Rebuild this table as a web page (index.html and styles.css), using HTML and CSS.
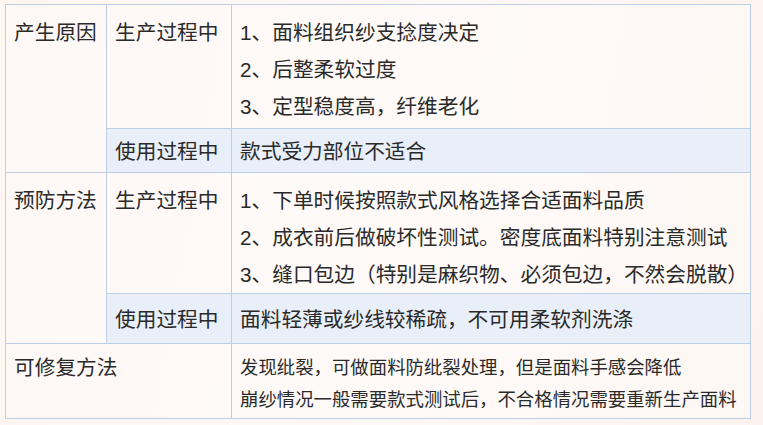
FILE: index.html
```html
<!DOCTYPE html>
<html lang="zh">
<head>
<meta charset="utf-8">
<link rel="stylesheet" href="styles.css">
</head>
<body>
<table class="grid">
  <colgroup>
    <col class="c1">
    <col class="c2">
    <col class="c3">
  </colgroup>
  <tr class="row-a">
    <td rowspan="2" class="head">产生原因</td>
    <td>生产过程中</td>
    <td>
      <div>1、面料组织纱支捻度决定</div>
      <div>2、后整柔软过度</div>
      <div>3、定型稳度高，纤维老化</div>
    </td>
  </tr>
  <tr class="row-b shade">
    <td>使用过程中</td>
    <td>款式受力部位不适合</td>
  </tr>
  <tr class="row-c">
    <td rowspan="2" class="head">预防方法</td>
    <td>生产过程中</td>
    <td>
      <div>1、下单时候按照款式风格选择合适面料品质</div>
      <div>2、成衣前后做破坏性测试。密度底面料特别注意测试</div>
      <div>3、缝口包边（特别是麻织物、必须包边，不然会脱散）</div>
    </td>
  </tr>
  <tr class="row-d shade">
    <td>使用过程中</td>
    <td>面料轻薄或纱线较稀疏，不可用柔软剂洗涤</td>
  </tr>
  <tr class="row-e">
    <td colspan="2" class="head">可修复方法</td>
    <td class="small">
      <div>发现纰裂，可做面料防纰裂处理，但是面料手感会降低</div>
      <div>崩纱情况一般需要款式测试后，不合格情况需要重新生产面料</div>
    </td>
  </tr>
</table>
</body>
</html>
```

FILE: styles.css
```css
html, body {
  margin: 0;
  padding: 0;
}
body {
  width: 763px;
  height: 425px;
  overflow: hidden;
  background: linear-gradient(100deg, #fdf6f1 0%, #fef9f6 55%, #fdf3ee 100%);
  font-family: "Liberation Sans", "Noto Sans CJK SC", sans-serif;
  color: #2a2a2a;
}
.grid {
  margin: 4px 0 0 5px;
  width: 745px;
  table-layout: fixed;
  border-collapse: collapse;
  font-size: 20.7px;
}
.c1 { width: 101px; }
.c2 { width: 125px; }
.c3 { width: 519px; }
.grid td {
  border: 1px solid #bccfe6;
  vertical-align: top;
  padding: 0 0 0 8px;
  line-height: 37px;
  white-space: nowrap;
  background: rgba(255, 252, 249, 0.55);
}
.shade td {
  background: #e9eff8;
}
.grid td.head {
  background: rgba(255, 252, 249, 0.55);
}
.row-a { height: 124px; }
.row-a td { padding-top: 9px; }
.row-b { height: 44px; }
.row-b td { padding-top: 4px; }
.row-c { height: 120px; }
.row-c td { padding-top: 9px; }
.row-d { height: 50px; }
.row-d td { padding-top: 7px; }
.row-e { height: 75px; }
.row-e td { padding-top: 8px; line-height: 32px; }
.row-e td.small { font-size: 18.4px; }
```
